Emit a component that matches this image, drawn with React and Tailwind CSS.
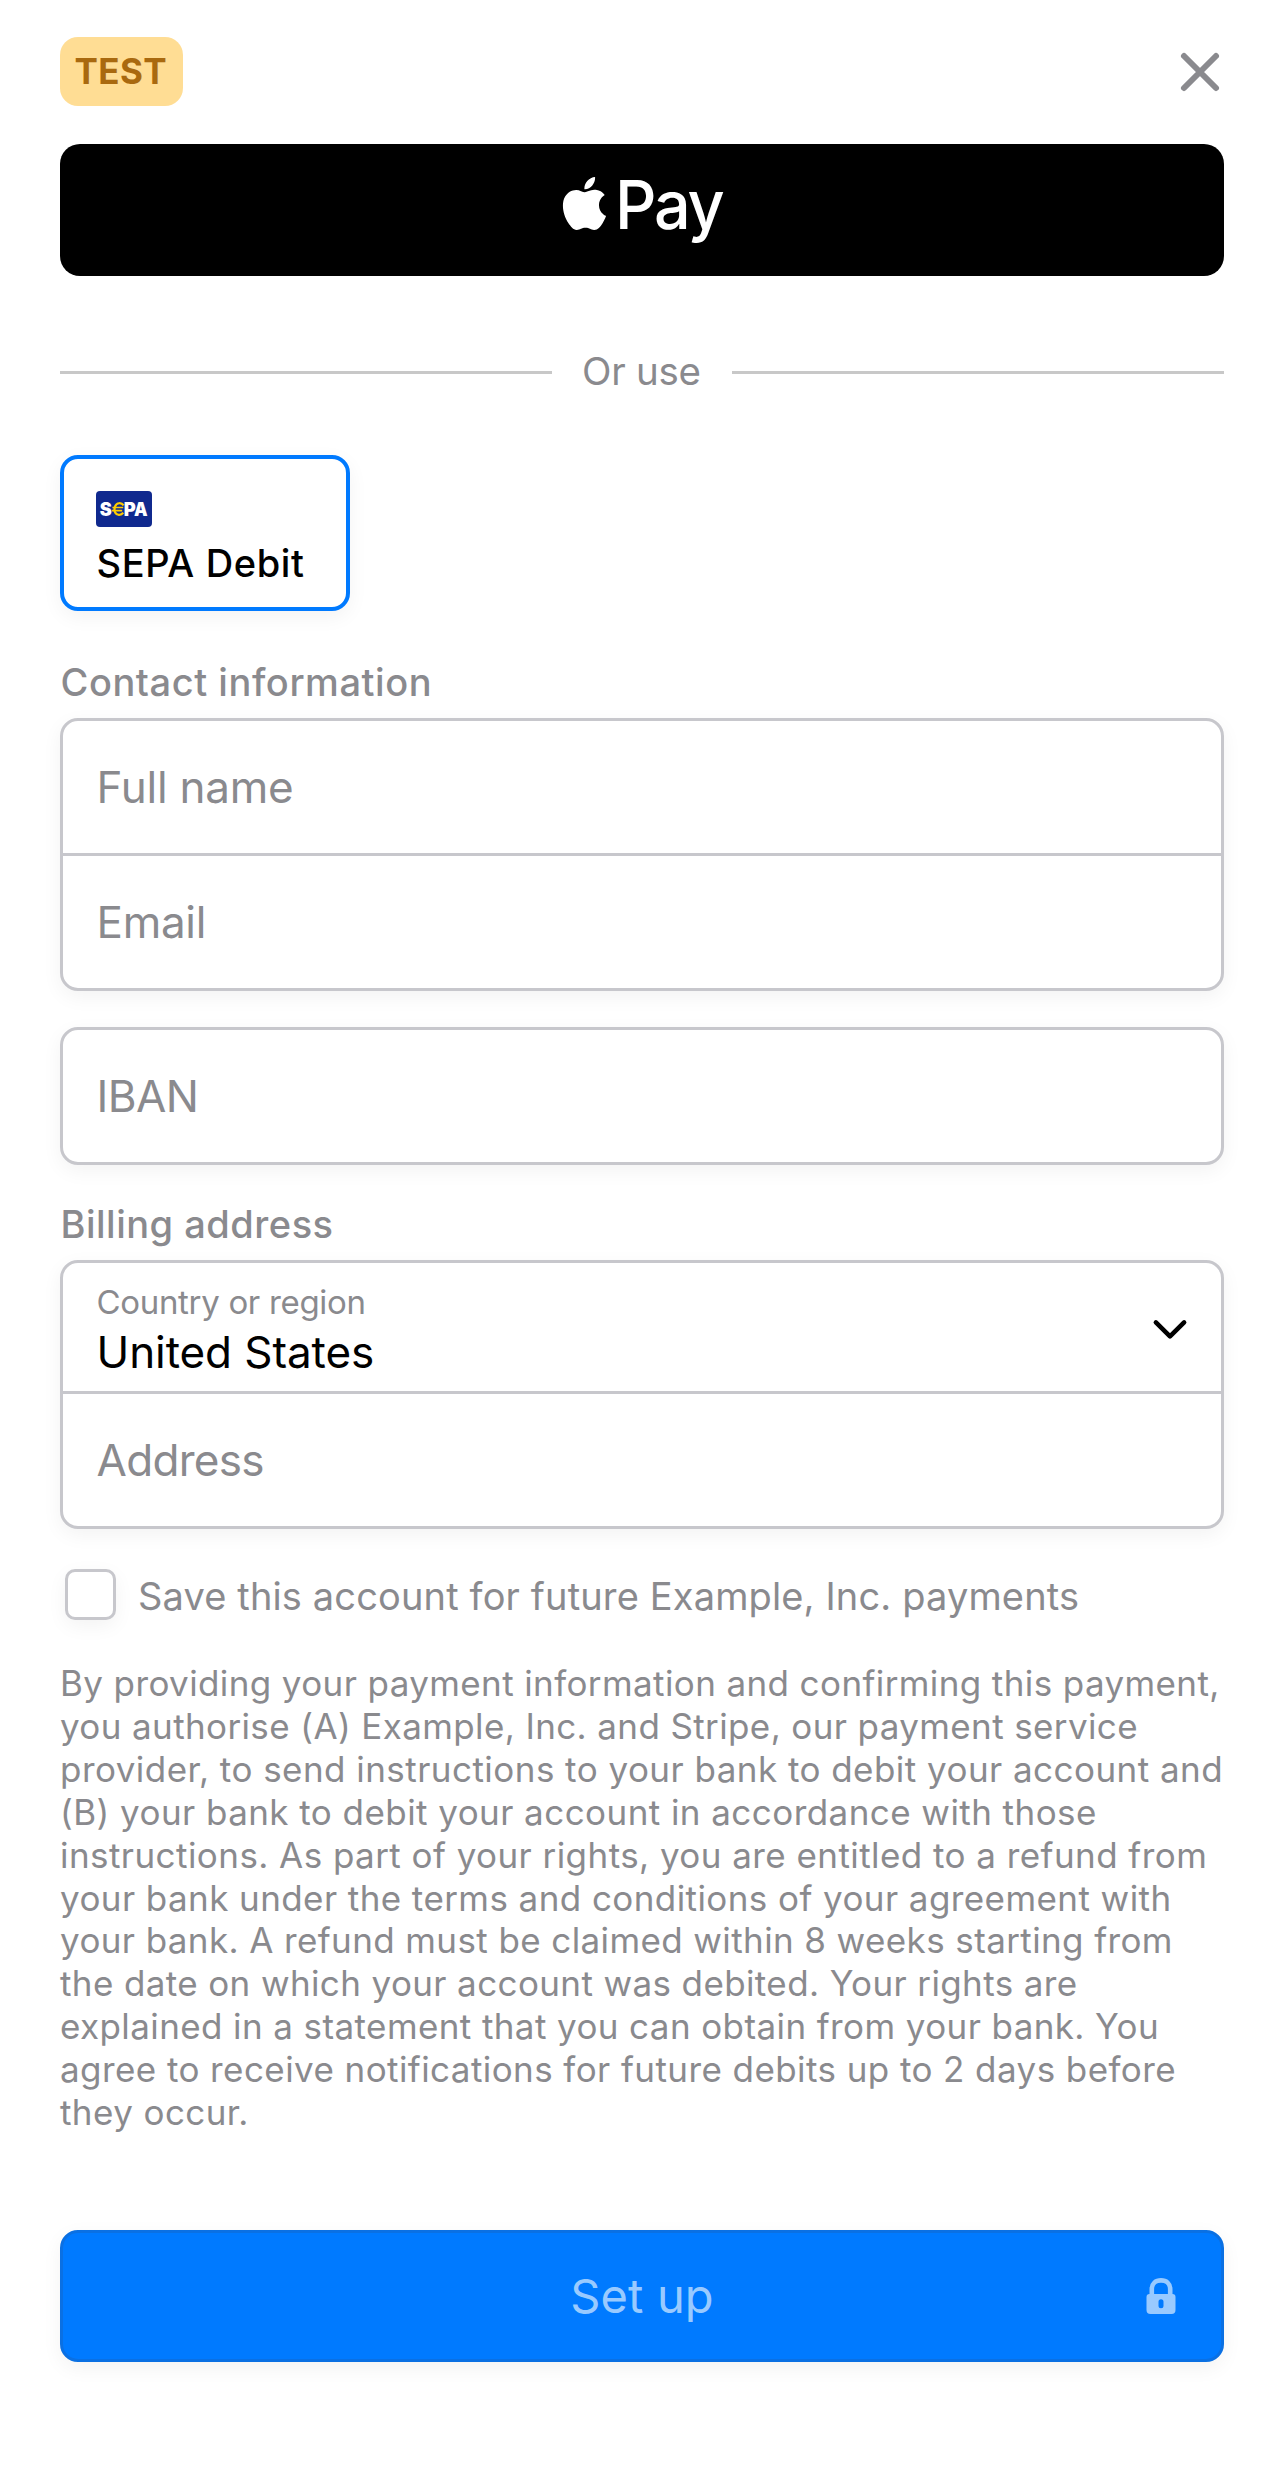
import React from "react";

const shadow = "shadow-[0_6px_20px_rgba(0,0,0,0.05)]";

const mandate = [
  ["By providing your payment information and confirming this payment,", "tracking-[0.39px]"],
  ["you authorise (A) Example, Inc. and Stripe, our payment service", "tracking-[0.38px]"],
  ["provider, to send instructions to your bank to debit your account and", "tracking-[0.46px]"],
  ["(B) your bank to debit your account in accordance with those", "tracking-[0.44px]"],
  ["instructions. As part of your rights, you are entitled to a refund from", "tracking-[0.44px]"],
  ["your bank under the terms and conditions of your agreement with", "tracking-[0.42px]"],
  ["your bank. A refund must be claimed within 8 weeks starting from", "tracking-[0.39px]"],
  ["the date on which your account was debited. Your rights are", "tracking-[0.38px]"],
  ["explained in a statement that you can obtain from your bank. You", "tracking-[0.4px]"],
  ["agree to receive notifications for future debits up to 2 days before", "tracking-[0.42px]"],
  ["they occur.", "tracking-[0.42px]"],
];

function CloseIcon() {
  return (
    <svg width="48" height="48" viewBox="0 0 48 48" fill="none" stroke="#8a8a8e" strokeWidth="6" strokeLinecap="round">
      <path d="M8 8 L40 40 M40 8 L8 40" />
    </svg>
  );
}

function AppleLogo() {
  return (
    <svg width="53" height="53" viewBox="0 0 24 24" fill="#fff">
      <path d="M12.152 6.896c-.948 0-2.415-1.078-3.96-1.04-2.04.027-3.91 1.183-4.961 3.014-2.117 3.675-.546 9.103 1.519 12.09 1.013 1.454 2.208 3.09 3.792 3.039 1.52-.065 2.09-.987 3.935-.987 1.831 0 2.35.987 3.96.948 1.637-.026 2.676-1.48 3.676-2.948 1.156-1.688 1.636-3.325 1.662-3.415-.039-.013-3.182-1.221-3.22-4.857-.026-3.04 2.48-4.494 2.597-4.559-1.429-2.09-3.623-2.324-4.39-2.376-2-.156-3.675 1.09-4.61 1.09zM15.53 3.83c.843-1.012 1.4-2.427 1.245-3.83-1.207.052-2.662.805-3.532 1.818-.78.896-1.454 2.338-1.273 3.714 1.338.104 2.715-.688 3.559-1.701" />
    </svg>
  );
}

function SepaLogo() {
  return (
    <svg width="56" height="36" viewBox="0 0 56 36" fontFamily="Inter, sans-serif" fontWeight="900" fontSize="18.4">
      <rect width="56" height="36" rx="4" fill="#10298e" />
      <text x="3.8" y="24.6" fill="#fff" textLength="12" lengthAdjust="spacingAndGlyphs">S</text>
      <g fill="none" stroke="#ffcc00" strokeWidth="2.2">
        <path d="M27.6 14.4 C25.6 11.4 20.4 11.2 19 15.6 C17.4 20.6 19.8 24 23.2 23.8 C25.2 23.7 26.4 22.8 27.2 21.6" />
        <path d="M16.4 16.5 H27.2 M15.8 19.6 H26.2" strokeWidth="1.7" />
      </g>
      <text x="27.8" y="24.6" fill="#fff" textLength="12" lengthAdjust="spacingAndGlyphs">P</text>
      <text x="38" y="24.6" fill="#fff" textLength="13.6" lengthAdjust="spacingAndGlyphs">A</text>
    </svg>
  );
}

function ChevronIcon() {
  return (
    <svg width="36" height="24" viewBox="0 0 36 24" fill="none" stroke="#000" strokeWidth="4.6" strokeLinecap="round" strokeLinejoin="round">
      <path d="M3.9 4.4 L18 18.4 L32.1 4.4" />
    </svg>
  );
}

function LockIcon() {
  return (
    <svg width="30" height="36" viewBox="0 0 30 36">
      <path d="M5.8 17 V11 C5.8 5.4 9.6 2.4 15 2.4 C20.4 2.4 24.2 5.4 24.2 11 V17" fill="none" stroke="#99caff" strokeWidth="4.6" />
      <path
        fill="#99caff"
        fillRule="evenodd"
        d="M3.5 16 H26.5 A3 3 0 0 1 29.5 19 V32 A4 4 0 0 1 25.5 36 H4.5 A4 4 0 0 1 0.5 32 V19 A3 3 0 0 1 3.5 16 Z M15 21.3 A2.5 2.5 0 0 0 12.5 23.8 V27.8 A2.5 2.5 0 0 0 17.5 27.8 V23.8 A2.5 2.5 0 0 0 15 21.3 Z"
      />
    </svg>
  );
}

function FieldGroup({ children, className }) {
  return (
    <div className={`rounded-[18px] border-[3px] border-[#c7c7cc] bg-white divide-y-[3px] divide-[#c7c7cc] ${shadow} ${className}`}>
      {children}
    </div>
  );
}

function Field({ children, className }) {
  return (
    <div className={`flex h-[132px] box-content items-center pl-[33.5px] text-[44px] text-[#8a8a8e] ${className}`}>{children}</div>
  );
}

export default function App() {
  return (
    <div className="flex h-[2482px] w-[1284px] flex-col bg-white px-[60px] pt-[37px] font-['Inter',sans-serif] whitespace-nowrap">
      <header className="flex h-[69px] shrink-0 items-center justify-between">
        <span className="flex h-[69px] w-[123px] items-center rounded-[18px] bg-[#ffdd94] pl-[14.5px] text-[35px] font-bold tracking-[0.4px] text-[#a9690f]">
          TEST
        </span>
        <button className="pt-px" aria-label="Close">
          <CloseIcon />
        </button>
      </header>

      <button className="mt-[38px] flex h-[132px] shrink-0 rounded-[20px] bg-black pt-[33px] pl-[497.5px] text-white">
        <AppleLogo />
        <span className="ml-[4px] origin-left scale-x-[0.965] text-[67px] leading-[56px] font-medium tracking-[-2.3px]">Pay</span>
      </button>

      <div className="mt-[73px] flex h-[46px] shrink-0 items-center gap-8 text-[38.5px] tracking-[-0.27px] text-[#8a8a8e]">
        <span className="h-[3px] w-[492px] bg-[#c8c8c8]" />
        <span className="-ml-[2px] w-[120px]">Or use</span>
        <span className="-ml-[2px] h-[3px] w-[492px] bg-[#c8c8c8]" />
      </div>

      <div className={`mt-[60px] h-[156px] w-[290px] shrink-0 rounded-[18px] border-[4.5px] border-[#007aff] bg-white pt-[31.5px] pl-8 ${shadow}`}>
        <SepaLogo />
        <div className="mt-[13px] h-[46px] pl-[0.5px] text-[38px] leading-[46px] font-medium tracking-[0.64px]">SEPA Debit</div>
      </div>

      <h2 className="mt-[48px] h-[46px] shrink-0 pl-[0.5px] text-[38px] leading-[46px] font-medium tracking-[0.56px] text-[#8a8a8e]">Contact information</h2>
      <FieldGroup className="mt-[13px]">
        <Field className="tracking-[-0.24px]">Full name</Field>
        <Field className="tracking-[-0.3px]">Email</Field>
      </FieldGroup>
      <FieldGroup className="mt-9">
        <Field className="tracking-[-0.6px]">IBAN</Field>
      </FieldGroup>

      <h2 className="mt-9 h-[46px] shrink-0 pl-[0.5px] text-[38px] leading-[46px] font-medium tracking-[0.5px] text-[#8a8a8e]">Billing address</h2>
      <FieldGroup className="mt-[13px]">
        <div className="box-content flex h-[128px] items-start justify-between pr-[33px] pl-[33.5px]">
          <div className="pt-[19px]">
            <div className="text-[33px] leading-10 tracking-[-0.32px] text-[#8a8a8e]">Country or region</div>
            <div className="mt-2 text-[44px] leading-[44px] tracking-[-0.08px] text-black">United States</div>
          </div>
          <span className="pt-[55px]">
            <ChevronIcon />
          </span>
        </div>
        <Field className="tracking-[-0.7px]">Address</Field>
      </FieldGroup>

      <label className="mt-10 flex h-[51px] shrink-0 items-center pl-[4.5px] text-[38px] tracking-[0.14px] text-[#8a8a8e]">
        <span className={`h-[51px] w-[51px] rounded-[10px] border-[3px] border-[#c7c7cc] bg-white ${shadow}`} />
        <span className="mt-[3px] ml-[22.5px]">Save this account for future Example, Inc. payments</span>
      </label>

      <p className="mt-[42px] h-[473px] shrink-0 text-[35px] leading-[42.9px] text-[#8a8a8e]">
        {mandate.map(([line, tracking]) => (
          <span key={line} className={`block ${tracking}`}>
            {line}
          </span>
        ))}
      </p>

      <button className={`mt-[95px] grid h-[132px] shrink-0 grid-cols-[1fr_auto_1fr] items-center rounded-[18px] border-[3px] border-[#0a70e3] bg-[#007aff] text-[47px] tracking-[0.1px] text-[#99caff] ${shadow}`}>
        <span />
        <span>Set up</span>
        <span className="justify-self-end pr-[45px]">
          <LockIcon />
        </span>
      </button>
    </div>
  );
}
